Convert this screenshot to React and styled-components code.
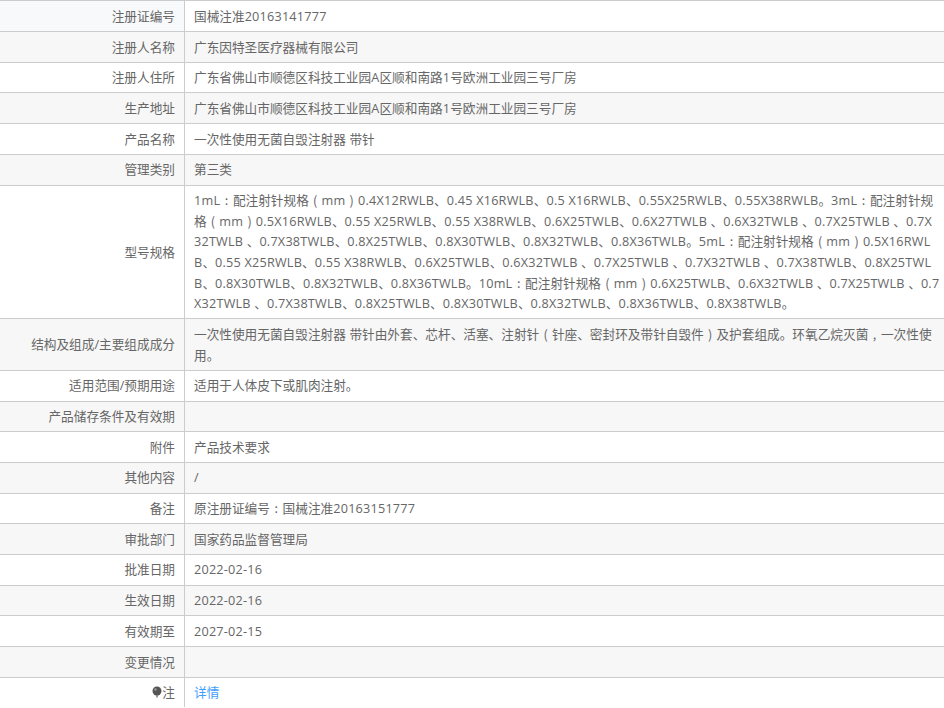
import React from "react";
import styled, { createGlobalStyle } from "styled-components";

const Global = createGlobalStyle`
  html, body { margin: 0; padding: 0; background: #fff; overflow: hidden; }
`;

const Sheet = styled.div`
  width: 944px;
  padding-top: 0.4px;
  font-family: "Open Sans", "Noto Sans CJK SC", sans-serif;
  font-size: 12.67px;
  line-height: 20.65px;
  color: #666;
`;

const Row = styled.div`
  display: grid;
  grid-template-columns: 185px 1fr;
  border-top: 1px solid #ccc;
  background: ${(p) => (p.$striped ? "#f7f7f7" : "#fff")};
`;

const Label = styled.div`
  display: flex;
  align-items: center;
  justify-content: flex-end;
  padding: 4.525px 9px 4.525px 0;
  border-right: 1px solid #ccc;
  background: ${(p) => (p.$first ? "#f8f9fb" : "transparent")};
`;

const Value = styled.div`
  padding: 4.525px 4.55px 4.525px 9px;
  min-height: 20.65px;
  word-break: break-all;
`;

const Punct = styled.span`
  display: inline-block;
  width: 1em;
  text-align: center;
  font-family: ${(p) => (p.$colon ? '"Noto Sans CJK TC"' : '"Noto Sans CJK SC"')}, sans-serif;
  font-feature-settings: "pwid";
`;

const Latin = styled.span`
  letter-spacing: 0.22px;
`;

const Link = styled.a`
  color: #409eff;
`;

const Bulb = styled.svg`
  width: 10px;
  height: 13px;
`;

const spec = "1mL：配注射针规格（mm）0.4X12RWLB、0.45 X16RWLB、0.5 X16RWLB、0.55X25RWLB、0.55X38RWLB。3mL：配注射针规格（mm）0.5X16RWLB、0.55 X25RWLB、0.55 X38RWLB、0.6X25TWLB、0.6X27TWLB 、0.6X32TWLB 、0.7X25TWLB 、0.7X3\u20602TWLB 、0.7X38TWLB、0.8X25TWLB、0.8X30TWLB、0.8X32TWLB、0.8X36TWLB。5mL：配注射针规格（mm）0.5X16RWLB、0.55 X25RWLB、0.55 X38RWLB、0.6X25TWLB、0.6X32TWLB 、0.7X25TWLB 、0.7X32TWLB 、0.7X38TWLB、0.8X25TWLB、0.8X30TWLB、0.8X32TWLB、0.8X36TWLB。10mL：配注射针规格（mm）0.6X25TWLB、0.6X32TWLB 、0.7X25TWLB 、0.7X32TWLB 、0.7X38TWLB、0.8X25TWLB、0.8X30TWLB、0.8X32TWLB、0.8X36TWLB、0.8X38TWLB。";

const rows = [
  ["注册证编号", "国械注准20163141777"],
  ["注册人名称", "广东因特圣医疗器械有限公司"],
  ["注册人住所", "广东省佛山市顺德区科技工业园A区顺和南路1号欧洲工业园三号厂房"],
  ["生产地址", "广东省佛山市顺德区科技工业园A区顺和南路1号欧洲工业园三号厂房"],
  ["产品名称", "一次性使用无菌自毁注射器 带针"],
  ["管理类别", "第三类"],
  ["型号规格", spec],
  ["结构及组成/主要组成成分", "一次性使用无菌自毁注射器 带针由外套、芯杆、活塞、注射针（针座、密封环及带针自毁件）及护套组成。环氧乙烷灭菌，一次性使用。"],
  ["适用范围/预期用途", "适用于人体皮下或肌肉注射。"],
  ["产品储存条件及有效期", ""],
  ["附件", "产品技术要求"],
  ["其他内容", "/"],
  ["备注", "原注册证编号：国械注准20163151777"],
  ["审批部门", "国家药品监督管理局"],
  ["批准日期", "2022-02-16"],
  ["生效日期", "2022-02-16"],
  ["有效期至", "2027-02-15"],
  ["变更情况", ""],
];

const format = (text) =>
  text.split(/([：，（）]|[0-9A-Za-z.\- \u2060]+)/).map((part, i) => {
    if (i % 2 === 0) return part;
    return /[：，（）]/.test(part) ? (
      <Punct key={i} $colon={part === "："}>{part}</Punct>
    ) : (
      <Latin key={i}>{part}</Latin>
    );
  });

export default function App() {
  return (
    <>
      <Global />
      <Sheet>
        {rows.map(([k, v], i) => (
          <Row key={k} $striped={i % 2 === 1}>
            <Label $first={i === 0}>{k}</Label>
            <Value>{format(v)}</Value>
          </Row>
        ))}
        <Row>
          <Label>
            <Bulb viewBox="0 0 10 13">
              <circle cx="5" cy="5" r="4.5" fill="#555" />
              <circle cx="3.5" cy="3.5" r="1.2" fill="#999" />
              <path d="M3.5 9h3l-1.5 3.5z" fill="#888" />
            </Bulb>
            注
          </Label>
          <Value><Link>详情</Link></Value>
        </Row>
      </Sheet>
    </>
  );
}
